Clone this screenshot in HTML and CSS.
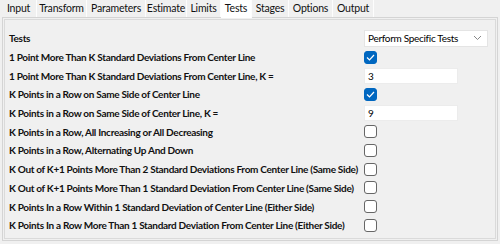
FILE: index.html
```html
<!DOCTYPE html>
<html lang="en">
<head>
    <meta charset="UTF-8">
    <title>Tests</title>
    <link rel="stylesheet" href="styles.css">
</head>
<body>
    <div class="tabs">
        <div class="tab" style="width: 36px">Input</div>
        <div class="tab" style="width: 50px">Transform</div>
        <div class="tab" style="width: 59px">Parameters</div>
        <div class="tab" style="width: 41px">Estimate</div>
        <div class="tab" style="width: 34px">Limits</div>
        <div class="tab active" style="width: 31px">Tests</div>
        <div class="tab" style="width: 37px">Stages</div>
        <div class="tab" style="width: 44px">Options</div>
        <div class="tab" style="width: 41px">Output</div>
    </div>

    <div class="panel">
        <div class="inner">
            <div class="row">
                <span class="label">Tests</span>
                <div class="select"><span>Perform Specific Tests</span>
                    <svg width="9" height="6" viewBox="0 0 9 6"><path d="M1 1 L4.5 4.5 L8 1" fill="none" stroke="#888" stroke-width="1"/></svg>
                </div>
            </div>
            <div class="row">
                <span class="label">1 Point More Than K Standard Deviations From Center Line</span>
                <span class="check on"><svg width="9" height="7" viewBox="0 0 9 7"><path d="M1 3.5 L3.5 6 L8 1" fill="none" stroke="#fff" stroke-width="1.2"/></svg></span>
            </div>
            <div class="row">
                <span class="label">1 Point More Than K Standard Deviations From Center Line, K =</span>
                <div class="field">3</div>
            </div>
            <div class="row">
                <span class="label">K Points in a Row on Same Side of Center Line</span>
                <span class="check on"><svg width="9" height="7" viewBox="0 0 9 7"><path d="M1 3.5 L3.5 6 L8 1" fill="none" stroke="#fff" stroke-width="1.2"/></svg></span>
            </div>
            <div class="row">
                <span class="label">K Points in a Row on Same Side of Center Line, K =</span>
                <div class="field">9</div>
            </div>
            <div class="row">
                <span class="label">K Points in a Row, All Increasing or All Decreasing</span>
                <span class="check"></span>
            </div>
            <div class="row">
                <span class="label">K Points in a Row, Alternating Up And Down</span>
                <span class="check"></span>
            </div>
            <div class="row">
                <span class="label">K Out of K+1 Points More Than 2 Standard Deviations From Center Line (Same Side)</span>
                <span class="check"></span>
            </div>
            <div class="row">
                <span class="label">K Out of K+1 Points More Than 1 Standard Deviation From Center Line (Same Side)</span>
                <span class="check"></span>
            </div>
            <div class="row">
                <span class="label">K Points In a Row Within 1 Standard Deviation of Center Line (Either Side)</span>
                <span class="check"></span>
            </div>
            <div class="row">
                <span class="label">K Points In a Row More Than 1 Standard Deviation From Center Line (Either Side)</span>
                <span class="check"></span>
            </div>
        </div>
    </div>
</body>
</html>
```

FILE: styles.css
```css
body {
    margin: 0;
    background-color: #f0f0f0;
    font-family: 'Lato', 'Noto Sans', sans-serif;
    color: #000;
    width: 500px;
    height: 244px;
    overflow: hidden;
}

.tabs {
    display: flex;
    height: 17px;
    padding-left: 1px;
}

.tab {
    box-sizing: border-box;
    height: 17px;
    font-size: 10.5px;
    letter-spacing: -0.2px;
    line-height: 17px;
    text-align: center;
    white-space: nowrap;
    background-color: #f0f0f0;
    border-right: 1px solid #fdfdfd;
    color: #111;
}

.tab.active {
    background-color: #fff;
    height: 18px;
}

.panel {
    margin: 0 2px 0 2px;
    height: 224px;
    box-sizing: border-box;
    border: 1px solid #d4d4d4;
    padding: 1px;
    background-color: #f0f0f0;
}

.inner {
    height: 100%;
    box-sizing: border-box;
    border: 1px solid #dadada;
    padding: 9px 0 0 4px;
    display: flex;
    flex-direction: column;
}

.row {
    display: grid;
    grid-template-columns: 355px auto;
    align-items: center;
    height: 18.7px;
}

.label {
    font-size: 10px;
    font-weight: 700;
    letter-spacing: -0.3px;
    white-space: nowrap;
    color: #111;
}

.select {
    box-sizing: border-box;
    width: 124px;
    height: 17px;
    background-color: #fff;
    border: 1px solid #e4e4e4;
    font-size: 10px;
    letter-spacing: -0.3px;
    white-space: nowrap;
    padding-left: 3px;
    display: flex;
    justify-content: space-between;
    align-items: center;
    padding-right: 5px;
}

.check {
    box-sizing: border-box;
    width: 13px;
    height: 13px;
    border: 1px solid #666;
    border-radius: 3px;
    background-color: #fff;
    display: flex;
    align-items: center;
    justify-content: center;
}

.check.on {
    background-color: #0067c0;
    border-color: #0067c0;
}

.field {
    box-sizing: border-box;
    width: 94px;
    height: 16px;
    background-color: #fff;
    border: 1px solid #ececec;
    font-size: 10px;
    line-height: 14px;
    padding-left: 3px;
}
```
